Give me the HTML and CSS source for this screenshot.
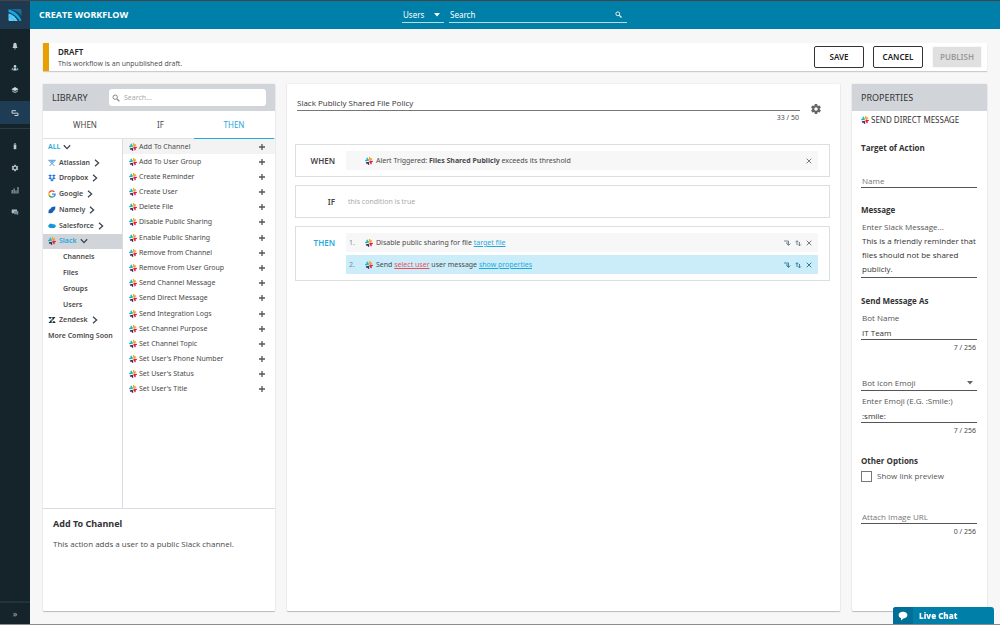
FILE: index.html
```html
<!DOCTYPE html>
<html lang="en">
<head>
<meta charset="utf-8">
<title>Create Workflow</title>
<link rel="stylesheet" href="styles.css">
</head>
<body>
<svg class="sprite" aria-hidden="true">
  <symbol id="slack" viewBox="0 0 16 16">
    <g fill="none" stroke-width="3" stroke-linecap="round" transform="rotate(-14 8 8)">
      <path d="M2.200 5.600H7" stroke="#16b3a4"/>
      <path d="M5.700 2V6" stroke="#22b5c9"/>
      <path d="M10.600 2V5.500H13.800" stroke="#e9a820"/>
      <path d="M9.500 10.300H14" stroke="#e8152c"/>
      <path d="M10.800 9V13.800" stroke="#e01e4c"/>
      <path d="M2.400 10.600H5.600V13.800" stroke="#47204a"/>
    </g>
  </symbol>
  <symbol id="chev-right" viewBox="0 0 8 8"><path d="M2 .8 5.6 4 2 7.2" fill="none" stroke="#3c4650" stroke-width="1.3"/></symbol>
  <symbol id="chev-down" viewBox="0 0 8 8"><path d="M.8 2.2 4 5.6 7.2 2.2" fill="none" stroke="#3c4650" stroke-width="1.3"/></symbol>
  <symbol id="plus" viewBox="0 0 8 8"><path d="M4 1v6M1 4h6" stroke="#555" stroke-width="1.3"/></symbol>
  <symbol id="close" viewBox="0 0 8 8"><path d="M1.7 1.7 6.3 6.3M6.3 1.7 1.7 6.3" stroke="currentColor"/></symbol>
  <symbol id="indent" viewBox="0 0 8 8"><path d="M1 2h4.5v4M3.6 4.6 5.5 6.500 7.4 4.6M3 4h2" fill="none" stroke="currentColor" stroke-width=".9"/></symbol>
  <symbol id="swap" viewBox="0 0 8 8"><path d="M3 6V1.8M1.5 3.200 3 1.700 4.400 3.200M5.500 3v3.800M4.100 5.400 5.500 6.900 7 5.400" fill="none" stroke="currentColor" stroke-width=".9"/></symbol>
  <symbol id="search" viewBox="0 0 8 8"><circle cx="3.2" cy="3.2" r="2.2" fill="none" stroke="currentColor"/><path d="M5 5 7.4 7.4" stroke="currentColor" stroke-width="1.3"/></symbol>
  <symbol id="gear" viewBox="0 0 24 24"><path fill="currentColor" d="M19.400 13c0-.3.1-.6.1-1s0-.7-.1-1l2.100-1.600c.2-.2.200-.4.100-.6l-2-3.500c-.1-.2-.4-.3-.6-.2l-2.500 1c-.5-.4-1.100-.7-1.700-1l-.4-2.600c0-.3-.2-.5-.5-.5h-4c-.2 0-.5.200-.5.400l-.4 2.700c-.6.2-1.100.6-1.700 1l-2.500-1c-.2-.1-.5 0-.6.2l-2 3.500c-.1.200-.1.500.1.600L4.500 11c0 .3-.1.600-.1 1s0 .7.100 1l-2.100 1.600c-.2.200-.2.400-.1.600l2 3.500c.1.200.4.300.6.200l2.500-1c.5.4 1.100.7 1.700 1l.4 2.700c0 .2.200.4.500.4h4c.3 0 .5-.2.500-.4l.4-2.700c.6-.2 1.100-.6 1.700-1l2.500 1c.2.100.5 0 .6-.2l2-3.500c.1-.2.100-.5-.1-.6zM12 15.500a3.500 3.500 0 1 1 0-7 3.500 3.500 0 0 1 0 7z"/></symbol>
</svg>

<aside class="sidebar">
  <a class="logo" href="#" aria-label="Home">
    <svg viewBox="0 0 14 14"><path d="M1 1H12.500Q13.500 1 13.500 2V8C11 4.500 7 1.800 1 1z" fill="#1b6a92"/><path d="M.5 1.300C7 3 11.500 7 13.500 12.700L11.500 13C9.500 9 5 5.500 .5 4z" fill="#10a8e6"/><path d="M.5 5.500C4.500 6.500 8 9.500 9.800 13H1.500Q.5 13 .5 12z" fill="#5ccdf6"/><path d="M.5 8C3 9 5.500 11 6 13" fill="none" stroke="#2fb4e4" stroke-width=".6"/></svg>
  </a>
  <nav class="side-nav" aria-label="Main">
    <a href="#" aria-label="Alerts"><svg viewBox="0 0 8 8"><path d="M4 .8C2.600.8 2.300 2 2.300 3.300 2.300 5 1.500 5.300 1.500 6h5c0-.7-.8-1-.8-2.700C5.700 2 5.400.8 4 .8z" fill="#c4c9cc"/><path d="M3.200 6.500h1.600v.8H3.200z" fill="#c4c9cc"/></svg></a>
    <a href="#" aria-label="People"><svg viewBox="0 0 8 8"><circle cx="4" cy="2.400" r="1.300" fill="#cdd3d6"/><path d="M2.300 6.500c0-3.200 3.400-3.200 3.400 0z" fill="#cdd3d6"/><path d="M.5 6.300c0-2.700 1.500-3 1.800-2.300V6.300zM7.500 6.300c0-2.700-1.500-3-1.800-2.300V6.300z" fill="#4aa5bd"/></svg></a>
    <a href="#" aria-label="Applications"><svg viewBox="0 0 8 8"><path d="M.4 3.200 4 .9 7.600 3.200 4 5z" fill="#d5d8da"/><path d="M1 4.200 4 5.800 7 4.200V5.600L4 7.200 1 5.600z" fill="#7fa0a8"/></svg></a>
    <a href="#" class="active" aria-label="Workflows"><svg viewBox="0 0 8 8"><path d="M5 1.700H1V4.200H7V6.500H3.500" fill="none" stroke="#c9d2d8"/></svg></a>
  </nav>
  <nav class="side-nav side-nav-second" aria-label="Tools">
    <a href="#" aria-label="Security"><svg viewBox="0 0 8 8"><path d="M2.700 2.500h2.600V7.200H2.700z" fill="#c4c9cc"/><path d="M3.200 1h1.600v1.500H3.200z" fill="#65a5b0"/></svg></a>
    <a href="#" aria-label="Settings"><svg class="pale" viewBox="0 0 24 24"><use href="#gear"/></svg></a>
    <a href="#" aria-label="Reports"><svg viewBox="0 0 8 8"><path d="M1.200 4v3M3.100 2.500V7M5 4.500V7M7 1v6" stroke="#b3bbc0"/><path d="M.5 7.400h7" stroke="#65808c" stroke-width=".6"/></svg></a>
    <a href="#" aria-label="Messages"><svg viewBox="0 0 8 8"><path d="M.7 1.500H6V5H2.500L1.500 6V5H.7z" fill="#b3bbc0"/><path d="M3 3H7.300V6.300H6.800V7.300L5.600 6.300H3z" fill="#6f8f9c"/></svg></a>
  </nav>
  <button class="expand" type="button" aria-label="Expand menu">»</button>
</aside>

<div class="page">
  <header class="topbar">
    <h1>CREATE WORKFLOW</h1>
    <form class="top-search">
      <select class="scope" aria-label="Search in"><option>Users</option></select>
      <label class="query"><input type="search" placeholder="Search" aria-label="Search"><svg class="i8"><use href="#search"/></svg></label>
    </form>
  </header>

  <main class="content">
    <section class="banner">
      <div class="banner-text"><h2>DRAFT</h2><p>This workflow is an unpublished draft.</p></div>
      <div class="actions">
        <button type="button">SAVE</button>
        <button type="button">CANCEL</button>
        <button type="button" disabled>PUBLISH</button>
      </div>
    </section>

    <div class="columns">
      <section class="card library">
        <header class="card-head">
          <h2>LIBRARY</h2>
          <label class="lib-search"><svg class="i8"><use href="#search"/></svg><input type="search" placeholder="Search..." aria-label="Search library"></label>
        </header>
        <div class="tabs" role="tablist">
          <button type="button" role="tab">WHEN</button>
          <button type="button" role="tab">IF</button>
          <button type="button" role="tab" class="current" aria-selected="true">THEN</button>
        </div>
        <div class="browser">
          <ul class="apps">
            <li><a class="all" href="#">ALL <svg class="i8"><use href="#chev-down"/></svg></a></li>
            <li><a href="#"><svg class="i8" viewBox="0 0 8 8"><path d="M1 1.5 6.500 7M7 1.5 1.500 7M.5 1.3h7M2.500 3.500 4 2.300 5.500 3.500" fill="none" stroke="#3d8fd6" stroke-width=".9"/></svg>Atlassian <svg class="i8"><use href="#chev-right"/></svg></a></li>
            <li><a href="#"><svg class="i8" viewBox="0 0 8 8"><path d="M2.200.4 4 1.600 2.200 2.900.3 1.600zM5.800.4 7.700 1.600 5.800 2.900 4 1.600zM2.200 2.900 4 4.200 2.200 5.400.3 4.200zM5.800 2.900 7.700 4.200 5.800 5.400 4 4.200zM4 4.900 5.800 6.100 4 7.600 2.200 6.100z" fill="#1b74e0"/></svg>Dropbox <svg class="i8"><use href="#chev-right"/></svg></a></li>
            <li><a href="#"><svg class="i8" viewBox="0 0 8 8"><g fill="none" stroke-width="1.4"><path d="M1.200 2.600A3.100 3.100 0 0 1 6.300 1.900" stroke="#ea4335"/><path d="M1.200 2.600A3.100 3.100 0 0 0 1.200 5.400" stroke="#fbbc05"/><path d="M1.200 5.400A3.100 3.100 0 0 0 5.800 6.500" stroke="#34a853"/><path d="M5.800 6.500A3.100 3.100 0 0 0 7.100 4.100H4" stroke="#4285f4"/></g></svg>Google <svg class="i8"><use href="#chev-right"/></svg></a></li>
            <li><a href="#"><svg class="i8" viewBox="0 0 8 8"><path d="M.5 7.300C.3 4.500 1 3 2.500 3 2.600 1.500 4 .6 7.300.6 7.600 2.800 7 4.500 5.500 4.900 5.500 6.500 3.500 7.400.5 7.300z" fill="#1760b4"/></svg>Namely <svg class="i8"><use href="#chev-right"/></svg></a></li>
            <li><a href="#"><svg class="i8" viewBox="0 0 8 8"><ellipse cx="4" cy="4" rx="3.800" ry="2" fill="#1798d8"/><circle cx="2.800" cy="3.300" r="1.700" fill="#1798d8"/><circle cx="4.900" cy="4.600" r="1.700" fill="#1798d8"/></svg>Salesforce <svg class="i8"><use href="#chev-right"/></svg></a></li>
            <li class="open"><a href="#"><svg class="i8"><use href="#slack"/></svg>Slack <svg class="i8"><use href="#chev-down"/></svg></a></li>
            <li class="sub"><a href="#">Channels</a></li>
            <li class="sub"><a href="#">Files</a></li>
            <li class="sub"><a href="#">Groups</a></li>
            <li class="sub"><a href="#">Users</a></li>
            <li><a href="#"><svg class="i8" viewBox="0 0 8 8"><path d="M.6 1h3.100c0 2.200-3.100 2.200-3.100 0zM4.300 1h3.200L4.300 5zM3.700 3v4H.5zM4.300 7c0-2.200 3.200-2.200 3.200 0z" fill="#12353b"/></svg>Zendesk <svg class="i8"><use href="#chev-right"/></svg></a></li>
            <li><span>More Coming Soon</span></li>
          </ul>
          <ul class="steps">
            <li class="picked"><svg class="i8"><use href="#slack"/></svg><span>Add To Channel</span><button type="button" aria-label="Add"><svg class="i8"><use href="#plus"/></svg></button></li>
            <li><svg class="i8"><use href="#slack"/></svg><span>Add To User Group</span><button type="button" aria-label="Add"><svg class="i8"><use href="#plus"/></svg></button></li>
            <li><svg class="i8"><use href="#slack"/></svg><span>Create Reminder</span><button type="button" aria-label="Add"><svg class="i8"><use href="#plus"/></svg></button></li>
            <li><svg class="i8"><use href="#slack"/></svg><span>Create User</span><button type="button" aria-label="Add"><svg class="i8"><use href="#plus"/></svg></button></li>
            <li><svg class="i8"><use href="#slack"/></svg><span>Delete File</span><button type="button" aria-label="Add"><svg class="i8"><use href="#plus"/></svg></button></li>
            <li><svg class="i8"><use href="#slack"/></svg><span>Disable Public Sharing</span><button type="button" aria-label="Add"><svg class="i8"><use href="#plus"/></svg></button></li>
            <li><svg class="i8"><use href="#slack"/></svg><span>Enable Public Sharing</span><button type="button" aria-label="Add"><svg class="i8"><use href="#plus"/></svg></button></li>
            <li><svg class="i8"><use href="#slack"/></svg><span>Remove from Channel</span><button type="button" aria-label="Add"><svg class="i8"><use href="#plus"/></svg></button></li>
            <li><svg class="i8"><use href="#slack"/></svg><span>Remove From User Group</span><button type="button" aria-label="Add"><svg class="i8"><use href="#plus"/></svg></button></li>
            <li><svg class="i8"><use href="#slack"/></svg><span>Send Channel Message</span><button type="button" aria-label="Add"><svg class="i8"><use href="#plus"/></svg></button></li>
            <li><svg class="i8"><use href="#slack"/></svg><span>Send Direct Message</span><button type="button" aria-label="Add"><svg class="i8"><use href="#plus"/></svg></button></li>
            <li><svg class="i8"><use href="#slack"/></svg><span>Send Integration Logs</span><button type="button" aria-label="Add"><svg class="i8"><use href="#plus"/></svg></button></li>
            <li><svg class="i8"><use href="#slack"/></svg><span>Set Channel Purpose</span><button type="button" aria-label="Add"><svg class="i8"><use href="#plus"/></svg></button></li>
            <li><svg class="i8"><use href="#slack"/></svg><span>Set Channel Topic</span><button type="button" aria-label="Add"><svg class="i8"><use href="#plus"/></svg></button></li>
            <li><svg class="i8"><use href="#slack"/></svg><span>Set User's Phone Number</span><button type="button" aria-label="Add"><svg class="i8"><use href="#plus"/></svg></button></li>
            <li><svg class="i8"><use href="#slack"/></svg><span>Set User's Status</span><button type="button" aria-label="Add"><svg class="i8"><use href="#plus"/></svg></button></li>
            <li><svg class="i8"><use href="#slack"/></svg><span>Set User's Title</span><button type="button" aria-label="Add"><svg class="i8"><use href="#plus"/></svg></button></li>
          </ul>
        </div>
        <div class="details"><h3>Add To Channel</h3><p>This action adds a user to a public Slack channel.</p></div>
      </section>

      <section class="card editor">
        <div class="title-row">
          <div class="title-field">
            <input type="text" value="Slack Publicly Shared File Policy" aria-label="Workflow name">
            <span class="count">33 / 50</span>
          </div>
          <button class="config" type="button" aria-label="Workflow settings"><svg><use href="#gear"/></svg></button>
        </div>
        <div class="rule">
          <h3>WHEN</h3>
          <div class="rule-body">
            <div class="line"><span class="num"></span><svg class="i8"><use href="#slack"/></svg><p>Alert Triggered: <b>Files Shared Publicly</b> exceeds its threshold</p><button type="button" aria-label="Remove"><svg class="i8"><use href="#close"/></svg></button></div>
          </div>
        </div>
        <div class="rule">
          <h3>IF</h3>
          <div class="rule-body"><div class="line empty"><p>this condition is true</p></div></div>
        </div>
        <div class="rule">
          <h3 class="accent">THEN</h3>
          <div class="rule-body">
            <div class="line"><span class="num">1.</span><svg class="i8"><use href="#slack"/></svg><p>Disable public sharing for file <a href="#">target file</a></p><button type="button" aria-label="Indent"><svg class="i8"><use href="#indent"/></svg></button><button type="button" aria-label="Reorder"><svg class="i8"><use href="#swap"/></svg></button><button type="button" aria-label="Remove"><svg class="i8"><use href="#close"/></svg></button></div>
            <div class="line selected"><span class="num">2.</span><svg class="i8"><use href="#slack"/></svg><p>Send <a class="missing" href="#">select user</a> user message <a href="#">show properties</a></p><button type="button" aria-label="Indent"><svg class="i8"><use href="#indent"/></svg></button><button type="button" aria-label="Reorder"><svg class="i8"><use href="#swap"/></svg></button><button type="button" aria-label="Remove"><svg class="i8"><use href="#close"/></svg></button></div>
          </div>
        </div>
      </section>

      <section class="card properties">
        <header class="card-head"><h2>PROPERTIES</h2></header>
        <form class="props">
          <p class="props-title"><svg class="i8"><use href="#slack"/></svg>SEND DIRECT MESSAGE</p>
          <fieldset class="target">
            <legend>Target of Action</legend>
            <input type="text" placeholder="Name" aria-label="Name">
          </fieldset>
          <fieldset class="message">
            <legend>Message</legend>
            <label for="msg">Enter Slack Message...</label>
            <textarea id="msg" rows="3">This is a friendly reminder that files should not be shared publicly.</textarea>
          </fieldset>
          <fieldset class="sender">
            <legend>Send Message As</legend>
            <label for="bot">Bot Name</label>
            <input id="bot" type="text" value="IT Team">
            <span class="count">7 / 256</span>
            <select aria-label="Bot icon"><option>Bot Icon Emoji</option></select>
            <label for="emoji">Enter Emoji (E.G. :Smile:)</label>
            <input id="emoji" type="text" value=":smile:">
            <span class="count">7 / 256</span>
          </fieldset>
          <fieldset class="other">
            <legend>Other Options</legend>
            <label class="check"><input type="checkbox">Show link preview</label>
            <input type="text" placeholder="Attach Image URL" aria-label="Attach Image URL">
            <span class="count">0 / 256</span>
          </fieldset>
        </form>
      </section>
    </div>
  </main>
</div>
<button class="chat" type="button"><span class="chat-icon"><svg viewBox="0 0 10 10"><path d="M5 .8C2.300.8.6 2.100.6 4 .6 5.600 1.700 6.700 3 7.100V9.400L5.400 7.400C8 7.300 9.400 5.800 9.400 4 9.400 2.100 7.700.8 5 .8z" fill="#fff"/></svg></span>Live Chat</button>
</body>
</html>
```
FILE: styles.css
```css
* { box-sizing: border-box; margin: 0; padding: 0; }

body {
  display: flex;
  min-height: 100vh;
  border-top: 1px solid #444;
  border-bottom: 1px solid #8b8b8b;
  background: #f7f7f7;
  color: #4a4a4a;
  font: 7px/14px "Noto Sans", "Open Sans", sans-serif;
}

ul { list-style: none; }
a { color: inherit; text-decoration: none; }
button, input, select, textarea {
  border: 0;
  border-radius: 0;
  outline: 0;
  background: none;
  color: inherit;
  font: inherit;
  appearance: none;
}
fieldset { border: 0; min-width: 0; }
.sprite { position: absolute; width: 0; height: 0; }
.i8 { width: 8px; height: 8px; flex: none; }

/* Sidebar */
.sidebar {
  display: flex;
  flex-direction: column;
  flex: none;
  width: 30px;
  background: #15232b;
}
.logo {
  display: grid;
  place-items: center;
  height: 28px;
  margin-bottom: 6px;
  background: #1f3a50;
}
.logo svg { width: 14px; height: 14px; }
.side-nav a { display: grid; place-items: center; height: 22px; }
.side-nav svg { width: 8px; height: 8px; }
.side-nav .active { height: 23px; background: #1e3c53; }
.side-nav-second { margin-top: 4px; padding-top: 6px; border-top: 1px solid #2a3b45; }
.pale { color: #b3bbc0; }
.expand {
  height: 23px;
  margin-top: auto;
  border-top: 2px solid #22323b;
  color: #a9b2b7;
  font-size: 9px;
}

/* Header */
.page { display: flex; flex-direction: column; flex: 1; min-width: 0; }
.topbar {
  display: flex;
  height: 28px;
  padding: 0 9px;
  background: #007fa9;
  color: #fff;
}
.topbar h1 { width: 363px; font: 700 9px/28px "Open Sans", sans-serif; }
.top-search { display: flex; gap: 5px; align-items: flex-start; padding-top: 6px; font-size: 8px; }
.scope, .query { height: 16px; border-bottom: 1px solid #b5dce8; }
.scope {
  width: 42px;
  padding-left: 1px;
  background: url("data:image/svg+xml,%3Csvg xmlns='http://www.w3.org/2000/svg' viewBox='0 0 6 4'%3E%3Cpath d='M0 0h6L3 3.5z' fill='white'/%3E%3C/svg%3E") no-repeat right 4px center / 6px 4px;
}
.query { display: flex; align-items: center; width: 178px; padding: 0 5px 0 1px; }
.query input { flex: 1; min-width: 0; }
.query svg { width: 7px; height: 7px; }
.query input::placeholder { color: #fff; }

/* Banner */
.content { display: flex; flex-direction: column; flex: 1; gap: 13px; padding: 14px 13px 13px; }
.banner {
  display: flex;
  align-items: center;
  justify-content: space-between;
  height: 28px;
  padding: 0 5px 0 9px;
  border-left: 6px solid #e8a000;
  background: #fff;
  box-shadow: 0 1px 1px #ccc;
}
.banner-text { padding-top: 2px; }
.banner h2 { font-size: 8px; line-height: 12px; font-weight: 600; color: #222; }
.banner p { font-family: "Open Sans", sans-serif; line-height: 12px; }
.actions { display: flex; gap: 9px; }
.actions button {
  width: 50px;
  height: 22px;
  border: 1px solid #333;
  border-radius: 2px;
  color: #222;
  font-size: 8px;
  font-weight: 600;
}
.actions button:disabled { border-color: #f7f7f7; background: #e0e0e0; color: #999; }

/* Cards */
.columns { display: grid; flex: 1; grid-template-columns: 232px 1fr 135px; gap: 12px; }
.card {
  display: flex;
  flex-direction: column;
  min-width: 0;
  border-radius: 1px;
  background: #fff;
  box-shadow: 0 1px 1px #bbb, 0 0 1px #bbb;
}
.card-head {
  display: flex;
  align-items: center;
  height: 27px;
  padding: 0 9px;
  background: #d1d5da;
}
.card-head h2 { color: #333; font-size: 9px; font-weight: 400; }

/* Library */
.library .card-head { justify-content: space-between; }
.lib-search {
  display: flex;
  align-items: center;
  gap: 4px;
  width: 157px;
  height: 17px;
  padding: 0 3px;
  border-radius: 3px;
  background: #fff;
  color: #888;
}
.lib-search input { flex: 1; min-width: 0; }
.lib-search input::placeholder { color: #aaa; }
.tabs {
  display: grid;
  grid-template-columns: 84fr 67fr 80fr;
  height: 28px;
  padding-right: 1px;
  border-bottom: 1px solid #dde1e4;
}
.tabs button { height: 28px; border-bottom: 1px solid transparent; font-size: 8px; }
.tabs .current { border-color: #1fa9dc; color: #1fa9dc; }
.browser { display: grid; flex: 1; grid-template-columns: 79px 1fr; }
.apps, .steps { display: grid; grid-auto-rows: 1fr; }
.apps { align-self: start; height: 205px; font-weight: 600; }
.apps li { display: flex; align-items: center; padding-left: 5px; }
.apps a { display: flex; align-items: center; gap: 3px; }
.apps .all, .apps .open a { color: #1fa9dc; }
.apps .open { background: #d1d5da; }
.apps .sub { padding-left: 20px; }
.steps { padding-bottom: 111px; border-left: 1px solid #d9dde1; }
.steps li { display: flex; align-items: center; gap: 2px; padding: 0 9px 0 6px; }
.steps span { flex: 1; }
.steps button { display: flex; }
.steps .picked { background: #f3f3f3; }
.details { height: 103px; padding: 8px 10px; border-top: 1px solid #d9dde1; }
.details h3 { margin-bottom: 6px; font-size: 9px; color: #333; }
.details p { font: 8px/14px "Open Sans", sans-serif; }

/* Editor */
.editor { padding: 11px 10px 12px 8px; }
.title-row { display: flex; gap: 10px; margin-bottom: 19px; padding: 0 8px 0 2px; }
.title-field { flex: 1; }
.title-field input {
  display: block;
  width: 100%;
  height: 16px;
  border-bottom: 1px solid #777;
  color: #333;
  font: 8px/14px "Open Sans", sans-serif;
}
.count { display: block; padding-right: 1px; text-align: right; }
.config { width: 12px; height: 12px; margin-top: 8px; color: #666; }
.config svg { display: block; width: 12px; height: 12px; }
.rule { display: flex; gap: 11px; margin-bottom: 8px; padding: 6px 11px 6px 0; border: 1px solid #dcdfe2; }
.rule h3 { width: 39px; color: #444; font-size: 8px; font-weight: 600; line-height: 19px; text-align: right; }
.rule .accent { color: #1fa9dc; }
.rule-body { display: grid; flex: 1; gap: 3px; }
.line { display: flex; align-items: center; gap: 3px; height: 19px; padding: 0 5px 0 3px; background: #f7f7f7; }
.line p { flex: 1; }
.line a { color: #1fa9dc; text-decoration: underline; }
.line .missing { color: #e8505b; }
.line button { display: flex; color: #6b7e8a; }
.num { width: 13px; color: #7c8a93; }
.line.empty { padding-left: 2px; background: none; color: #aaa; }
.line.selected { background: #cbedfa; }
.selected button { color: #2c7c98; }

/* Properties */
.props { display: flex; flex-direction: column; padding: 2px 10px 20px 9px; font: 8px/14px "Open Sans", sans-serif; }
.props-title { display: flex; align-items: center; gap: 2px; color: #333; font-family: "Noto Sans", sans-serif; }
.props legend { width: 100%; color: #333; font-weight: 700; }
.props label { display: block; margin-top: 3px; padding-left: 1px; color: #555; }
.props input:not([type="checkbox"]), .props select, .props textarea {
  display: block;
  width: 100%;
  height: 15px;
  padding-left: 1px;
  border-bottom: 1px solid #555;
  color: #333;
}
.props ::placeholder { color: #777; }
.props .count { font: 7px/16px "Noto Sans", sans-serif; }
.target { margin-top: 14px; }
.target input { margin-top: 18px; }
.message { margin-top: 15px; }
.sender { margin-top: 16px; }
.props textarea { height: 44px; resize: none; overflow: hidden; }
.props select {
  margin: 20px 0 3px;
  color: #555;
  background: url("data:image/svg+xml,%3Csvg xmlns='http://www.w3.org/2000/svg' viewBox='0 0 6 4'%3E%3Cpath d='M0 0h6L3 3.5z' fill='%23666'/%3E%3C/svg%3E") no-repeat right 4px center / 6px 4px;
}
.other { margin-top: 15px; }
.props .check { display: flex; align-items: center; gap: 5px; margin-top: 1px; padding: 0; }
.check input { width: 11px; height: 11px; border: 1px solid #777; }
.other > input { margin-top: 26px; }

/* Chat */
.chat {
  position: fixed;
  right: 6px;
  bottom: 1px;
  display: flex;
  align-items: stretch;
  gap: 6px;
  width: 101px;
  height: 17px;
  border-radius: 3px 3px 0 0;
  background: #007fa9;
  color: #fff;
  font-family: "Open Sans", sans-serif;
  font-size: 8px;
  font-weight: 800;
  line-height: 17px;
  overflow: hidden;
}
.chat-icon { display: grid; place-items: center; width: 20px; background: #006f97; }
.chat-icon svg { width: 10px; height: 10px; }
```
